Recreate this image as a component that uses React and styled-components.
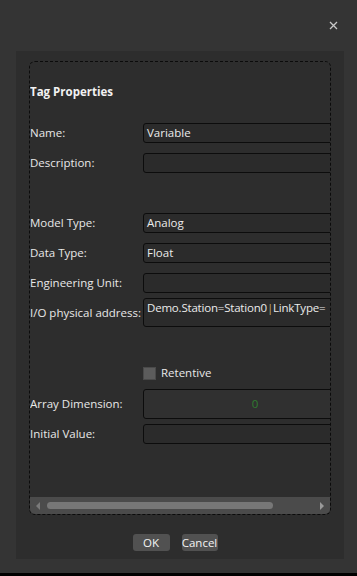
import React from "react";
import styled, { createGlobalStyle } from "styled-components";

const Global = createGlobalStyle`
  html, body { margin: 0; padding: 0; background: #343434; }
  body { font-family: "Open Sans", "Noto Sans", sans-serif; }
  * { box-sizing: border-box; }
`;

const Window = styled.div`
  width: 357px;
  height: 576px;
  background: #343434;
  display: flex;
  flex-direction: column;
  overflow: hidden;
  border-bottom: 3px solid #000;
`;

const Header = styled.div`
  height: 51px;
  flex: none;
  display: flex;
  justify-content: flex-end;
  padding: 20px 19px 0 0;
`;

const CloseButton = styled.button`
  width: 10px;
  height: 10px;
  padding: 0;
  border: none;
  background: transparent;
  display: flex;
  align-items: center;
  justify-content: center;
  cursor: pointer;
`;

const Panel = styled.div`
  height: 508px;
  flex: none;
  margin: 0 13px 0 16px;
  background: #2d2d2d;
  padding: 10px 13px 0 13px;
  display: flex;
  flex-direction: column;
`;

const DashedBox = styled.div`
  height: 454px;
  border: 1px dashed #0b0b0b;
  border-radius: 6px;
  display: flex;
  flex-direction: column;
  overflow: hidden;
`;

const Viewport = styled.div`
  flex: 1;
  overflow: hidden;
  padding: 22px 0 0 0;
`;

const Title = styled.div`
  font-size: 11.5px;
  font-weight: 700;
  color: #f2f2f2;
  line-height: 16px;
  height: 16px;
`;

const Row = styled.div`
  display: grid;
  grid-template-columns: 113px 224px;
  align-items: center;
  margin-top: ${(p) => p.$gap}px;
`;

const Label = styled.label`
  font-size: 11.5px;
  color: #e8e8e8;
  line-height: 16px;
  white-space: nowrap;
`;

const Field = styled.div`
  height: ${(p) => p.$h || 20}px;
  background: ${(p) => (p.$light ? "#303030" : "#2b2b2b")};
  border: 1px solid #0c0c0c;
  border-radius: 3px;
  font-size: 11.5px;
  letter-spacing: ${(p) => (p.$top ? "-0.2px" : "normal")};
  color: ${(p) => (p.$green ? "#2f7d2f" : "#ececec")};
  line-height: 16px;
  padding: ${(p) => (p.$top ? "1px 3px" : "0 3px")};
  display: flex;
  align-items: ${(p) => (p.$top ? "flex-start" : "center")};
  justify-content: ${(p) => (p.$center ? "center" : "flex-start")};
  white-space: nowrap;
  overflow: hidden;
`;

const Sep = styled.span`
  color: #c9b06b;
`;

const CheckRow = styled.div`
  display: flex;
  align-items: center;
  gap: 5px;
  margin-left: 113px;
  margin-top: ${(p) => p.$gap}px;
`;

const Box = styled.span`
  width: 13px;
  height: 13px;
  background: #5c5c5c;
  border: 1px solid #4a4a4a;
  display: inline-block;
`;

const CheckLabel = styled.span`
  font-size: 11.5px;
  color: #e8e8e8;
  line-height: 16px;
`;

const HScroll = styled.div`
  height: 17px;
  flex: none;
  background: #4b4b4b;
  display: flex;
  align-items: center;
  padding: 0 6px 0 6px;
  gap: 7px;
`;

const Track = styled.div`
  flex: 1;
  height: 7px;
  display: flex;
`;

const Thumb = styled.div`
  height: 7px;
  background: #777;
  border-radius: 4px;
`;

const Arrow = styled.svg`
  flex: none;
`;

const Buttons = styled.div`
  display: flex;
  justify-content: center;
  gap: 12px;
  margin-top: 19px;
  padding-right: 10px;
`;

const Btn = styled.button`
  height: 17px;
  width: ${(p) => p.$w}px;
  padding: 0;
  border: none;
  border-radius: 3px;
  background: #515151;
  color: #f4f4f4;
  font-family: "Open Sans", "Noto Sans", sans-serif;
  font-size: 11.5px;
  line-height: 16px;
  text-align: center;
`;

export default function App() {
  return (
    <>
      <Global />
      <Window>
        <Header>
          <CloseButton aria-label="close">
            <svg width="9" height="9" viewBox="0 0 9 9">
              <path d="M1 1L8 8M8 1L1 8" stroke="#c8c8c8" strokeWidth="1.3" />
            </svg>
          </CloseButton>
        </Header>
        <Panel>
          <DashedBox>
            <Viewport>
              <Title>Tag Properties</Title>
              <Row $gap={23}>
                <Label>Name:</Label>
                <Field>Variable</Field>
              </Row>
              <Row $gap={10}>
                <Label>Description:</Label>
                <Field />
              </Row>
              <Row $gap={40}>
                <Label>Model Type:</Label>
                <Field>Analog</Field>
              </Row>
              <Row $gap={10}>
                <Label>Data Type:</Label>
                <Field>Float</Field>
              </Row>
              <Row $gap={10}>
                <Label>Engineering Unit:</Label>
                <Field />
              </Row>
              <Row $gap={5}>
                <Label>I/O physical address:</Label>
                <Field $h={29} $top>
                  Demo.Station=Station0<Sep>|</Sep>LinkType=
                </Field>
              </Row>
              <CheckRow $gap={38}>
                <Box />
                <CheckLabel>Retentive</CheckLabel>
              </CheckRow>
              <Row $gap={8}>
                <Label>Array Dimension:</Label>
                <Field $h={30} $light $green $center>0</Field>
              </Row>
              <Row $gap={5}>
                <Label>Initial Value:</Label>
                <Field />
              </Row>
            </Viewport>
            <HScroll>
              <Arrow width="4" height="8" viewBox="0 0 4 8">
                <path d="M4 0L0 4L4 8Z" fill="#7a7a7a" />
              </Arrow>
              <Track>
                <Thumb style={{ width: "226px" }} />
              </Track>
              <Arrow width="4" height="8" viewBox="0 0 4 8">
                <path d="M0 0L4 4L0 8Z" fill="#9a9a9a" />
              </Arrow>
            </HScroll>
          </DashedBox>
          <Buttons>
            <Btn $w={37}>OK</Btn>
            <Btn $w={36}>Cancel</Btn>
          </Buttons>
        </Panel>
      </Window>
    </>
  );
}
